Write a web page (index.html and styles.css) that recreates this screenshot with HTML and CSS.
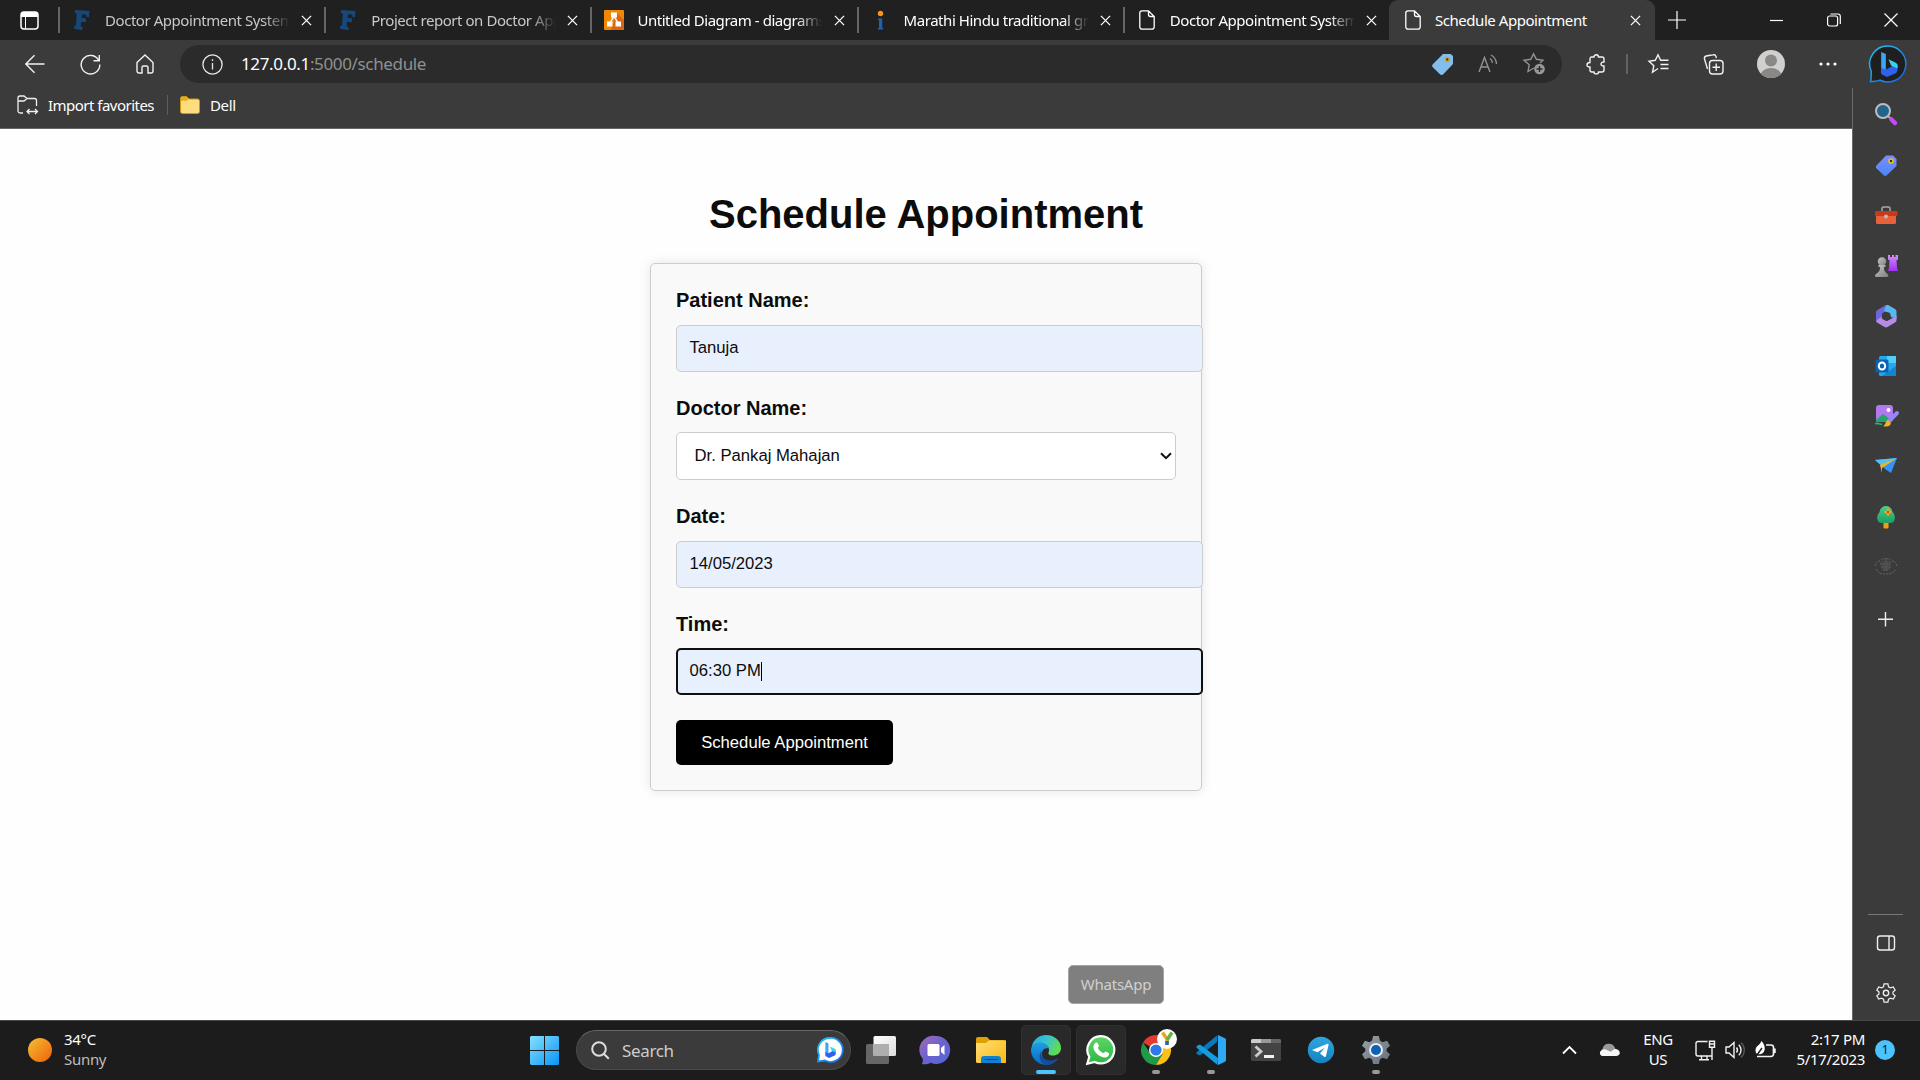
FILE: index.html
```
<!DOCTYPE html>
<html lang="en">
<head>
<meta charset="utf-8">
<title>Schedule Appointment</title>
<link rel="stylesheet" href="styles.css">
</head>
<body>
<svg class="defs" aria-hidden="true">
  <defs>
    <linearGradient id="gBing" x1="0" y1="0" x2="1" y2="1"><stop offset="0" stop-color="#22c7f0"/><stop offset="1" stop-color="#1d5fe8"/></linearGradient>
    <linearGradient id="gTag" x1="0" y1="0" x2="0" y2="1"><stop offset="0" stop-color="#7d8cff"/><stop offset="1" stop-color="#4a86f7"/></linearGradient>
    <linearGradient id="gPurple" x1="0" y1="0" x2="0" y2="1"><stop offset="0" stop-color="#d68bff"/><stop offset="1" stop-color="#a030f0"/></linearGradient>
    <linearGradient id="gGrey" x1="0" y1="0" x2="1" y2="1"><stop offset="0" stop-color="#c6c6c6"/><stop offset="1" stop-color="#7e7e7e"/></linearGradient>
    <linearGradient id="gWin" x1="0" y1="0" x2="1" y2="1"><stop offset="0" stop-color="#86e0ff"/><stop offset="1" stop-color="#0895f6"/></linearGradient>
    <linearGradient id="gSun" x1="0" y1="0" x2="1" y2="1"><stop offset="0" stop-color="#f3c02f"/><stop offset="1" stop-color="#f0600d"/></linearGradient>
    <linearGradient id="gChat" x1="0" y1="0" x2="1" y2="1"><stop offset="0" stop-color="#a469b5"/><stop offset=".5" stop-color="#6a62cf"/><stop offset="1" stop-color="#5367d8"/></linearGradient>
    <linearGradient id="gFolder" x1="0" y1="0" x2="1" y2="1"><stop offset="0" stop-color="#ffdf7a"/><stop offset="1" stop-color="#f7b90c"/></linearGradient>
    <linearGradient id="gEdgeTop" x1="0" y1="0" x2="1" y2=".4"><stop offset="0" stop-color="#2aa9e0"/><stop offset=".5" stop-color="#36c3d2"/><stop offset="1" stop-color="#61db54"/></linearGradient>
    <linearGradient id="gEdgeL" x1="0" y1="0" x2="0" y2="1"><stop offset="0" stop-color="#1f9fe2"/><stop offset="1" stop-color="#0b68c4"/></linearGradient>
    <linearGradient id="gWa" x1="0" y1="0" x2="0" y2="1"><stop offset="0" stop-color="#5fd669"/><stop offset="1" stop-color="#2cb742"/></linearGradient>
    <linearGradient id="gTg" x1="0" y1="0" x2="0" y2="1"><stop offset="0" stop-color="#2ea6e0"/><stop offset="1" stop-color="#1483c0"/></linearGradient>
    <linearGradient id="gWhite" x1="0" y1="0" x2="1" y2="1"><stop offset="0" stop-color="#fff"/><stop offset="1" stop-color="#dcdcdc"/></linearGradient>
    <linearGradient id="gGear" x1="0" y1="0" x2="1" y2="1"><stop offset="0" stop-color="#99a1aa"/><stop offset="1" stop-color="#66707b"/></linearGradient>
    <linearGradient id="gTree" x1="0" y1="0" x2="0" y2="1"><stop offset="0" stop-color="#49cf8c"/><stop offset="1" stop-color="#1e9c63"/></linearGradient>
    <symbol id="page" viewBox="0 0 16 20"><path d="M3 .8h6.500L15.200 6.500V17a2.200 2.200 0 0 1-2.200 2.200H3A2.200 2.200 0 0 1 .8 17V3A2.200 2.200 0 0 1 3 .8zM9.500 1v3.500a2 2 0 0 0 2 2H15"/></symbol>
    <symbol id="x" viewBox="0 0 12 12"><path d="M1 1l10 10M11 1L1 11"/></symbol>
    <symbol id="serifF" viewBox="0 0 16 20"><path fill="#17487a" d="M1 0l14.500 1-.6 6.200-2.400-.3-.5-2.400-4-.3-.5 3.700 4.600.3-.3 4-4.700-.4-.5 4.700 2 .8-.2 2.900L0 18.700l.2-2.700 1.700-.4L2.900 3.700.8 2.900z"/></symbol>
    <symbol id="bingb" viewBox="0 0 16 24"><path fill="#3aa7f5" d="M0 0l4.500 2v15L0 20z"/><path fill="#2e62ee" d="M0 15l4.500 2 9-5 2 3.500c.6 1.800 0 3.800-1.500 4.800L5.500 24 0 21z"/><path fill="#35d3ee" d="M7 7l7 3.300c2 1.200 2.400 3.600 1.500 5.500L9.500 13z"/></symbol>
    <symbol id="gear" viewBox="0 0 24 24"><path d="M9.800 1.500h4.400l.7 3.400 2.100 1.200 3.300-1.100 2.200 3.800L20 11v2l2.500 2.200-2.200 3.800-3.300-1.100-2.100 1.200-.7 3.400H9.800l-.7-3.400L7 17.900 3.700 19l-2.200-3.800L4 13v-2L1.500 8.800 3.700 5 7 6.100l2.100-1.200z"/></symbol>
  </defs>
</svg>

<header class="tabstrip">
  <button class="tab-actions"><svg width="19" height="19" viewBox="0 0 19 19"><rect x="1" y="1" width="17" height="17" rx="3" fill="none" stroke="#fff" stroke-width="1.500"/><path d="M1 6V4a3 3 0 0 1 3-3h11a3 3 0 0 1 3 3v2z" fill="#fff"/><path d="M5.500 6v12" stroke="#fff"/></svg></button>
  <div class="tab dim"><svg class="fav" viewBox="0 0 16 20"><use href="#serifF"/></svg><span class="title fade">Doctor Appointment System</span><svg class="close"><use href="#x"/></svg></div>
  <div class="tab dim"><svg class="fav" viewBox="0 0 16 20"><use href="#serifF"/></svg><span class="title fade">Project report on Doctor App</span><svg class="close"><use href="#x"/></svg></div>
  <div class="tab"><svg class="fav wide" viewBox="0 0 20 20"><rect width="20" height="20" rx="1" fill="#f08705"/><path d="M13 3l7 7v10H7z" fill="#d86613"/><path d="M10 6L5.500 14M10 6l4.500 8" stroke="#fff" stroke-width="1.500"/><path d="M7 2.500h6v5H7zM3 11.500h5.500v5H3zM11.500 11.500H17v5h-5.500z" fill="#fff"/></svg><span class="title fade">Untitled Diagram - diagrams.net</span><svg class="close"><use href="#x"/></svg></div>
  <div class="tab"><svg class="fav" viewBox="0 0 16 20"><circle cx="7.500" cy="3.500" r="2.700" fill="#f7931e"/><path d="M5 8.500h4.200V18h1v1.500H4.800V18h1.200v-8h-1z" fill="#1d62b0"/></svg><span class="title fade">Marathi Hindu traditional groom</span><svg class="close"><use href="#x"/></svg></div>
  <div class="tab"><svg class="fav line"><use href="#page"/></svg><span class="title fade">Doctor Appointment System</span><svg class="close"><use href="#x"/></svg></div>
  <div class="tab active"><svg class="fav line"><use href="#page"/></svg><span class="title">Schedule Appointment</span><svg class="close"><use href="#x"/></svg></div>
  <svg class="newtab" viewBox="0 0 18 18"><path d="M9 0v18M0 9h18"/></svg>
  <div class="winctl">
    <svg width="14" height="14" viewBox="0 0 14 14"><path d="M0 7.500h13"/></svg>
    <svg width="14" height="14" viewBox="0 0 14 14"><rect x=".6" y="3" width="10" height="10" rx="2"/><path d="M3.500 1h7.500a2.300 2.300 0 0 1 2.300 2.300V11"/></svg>
    <svg width="14" height="14" viewBox="0 0 14 14"><path d="M.5.500l13 13M13.500.5l-13 13"/></svg>
  </div>
</header>

<div class="toolbar">
  <div class="nav">
    <svg width="20" height="20" viewBox="0 0 20 20"><path d="M19.500 10H1M9.500 1.200L.8 10l8.700 8.800"/></svg>
    <svg width="21" height="21" viewBox="0 0 21 21"><path d="M18.800 6.500A9.300 9.300 0 1 0 19.800 10.500M19.300 1v5.800h-5.800"/></svg>
    <svg width="18" height="20" viewBox="0 0 18 20"><path d="M1 8.500L9 1l8 7.500V17a2 2 0 0 1-2 2h-3v-5.500a1.500 1.500 0 0 0-1.500-1.500h-3A1.500 1.500 0 0 0 6 13.500V19H3a2 2 0 0 1-2-2z"/></svg>
  </div>
  <div class="address">
    <svg class="info" width="21" height="21" viewBox="0 0 21 21"><circle cx="10.500" cy="10.500" r="9.600"/><path d="M10.500 9v6.500M10.500 5.300v1.700"/></svg>
    <span class="url"><b>127.0.0.1</b>:5000/schedule</span>
    <div class="addr-icons">
      <svg width="21" height="21" viewBox="0 0 21 21"><path d="M11 0h7.500L21 2v8L11.500 20c-1.200 1.200-2.600 1.200-3.800 0L1 13.500c-1.200-1.200-1.200-2.300 0-3.500z" fill="#83bdec"/><circle cx="15.300" cy="5.500" r="1.900" fill="#333" stroke="#d9a70a" stroke-width="1.500"/></svg>
      <svg class="mut" width="20" height="20" viewBox="0 0 20 20"><path d="M1 18L6.500 3.500 12 18M3 13h7M12 4.500a6 6 0 0 1 2.500 4.500M13 1a11 11 0 0 1 5.500 9"/></svg>
      <svg class="mut" width="22" height="22" viewBox="0 0 22 22"><path d="M11 15L5 18.500l1.200-6.700L1 7.300l6.800-1L10.500.8l2.900 5.500 6.600 1-3 2.700"/><circle cx="16.500" cy="16" r="5.300" fill="#999" stroke="none"/><path d="M16.500 13v6M13.500 16h6" stroke="#2b2b2b"/></svg>
    </div>
  </div>
  <div class="tools">
    <svg width="20" height="20" viewBox="0 0 20 20"><path d="M5 3h3c0-3 4.500-3 4.500 0H16a2 2 0 0 1 2 2v3c-4-.5-4 4.500 0 4V16a2 2 0 0 1-2 2h-3.500c0 2.500-4.500 2.500-4.500 0H6a2 2 0 0 1-2-2v-3c-4 .5-4-4.500 0-4.500V5a2 2 0 0 1 1-2z"/></svg>
    <i></i>
    <svg width="21" height="20" viewBox="0 0 21 20"><path d="M10 14.500L4.500 18.300l1.300-6.500L1 7.200l6.300-.9L10 .8l2.600 5.500h7.900M12.500 10.500h8M12.500 14.500h8"/></svg>
    <svg width="21" height="21" viewBox="0 0 21 21"><rect x="6.500" y="6.500" width="13.500" height="13.500" rx="3"/><path d="M13.200 9.500v7.500M9.500 13.200H17M4.500 15L1.500 5a2.500 2.500 0 0 1 1.700-3L10 .8a2.500 2.500 0 0 1 3 1.600l.4 1.600"/></svg>
    <svg class="avatar" width="28" height="28" viewBox="0 0 28 28"><clipPath id="av"><circle cx="14" cy="14" r="14"/></clipPath><g clip-path="url(#av)"><path fill="#d2d0ce" d="M0 0h28v28H0z"/><circle cx="14" cy="10.500" r="6" fill="#8a8886"/><ellipse cx="14" cy="26" rx="10.500" ry="8" fill="#8a8886"/></g></svg>
    <svg class="dots" width="18" height="4" viewBox="0 0 18 4"><circle cx="2" cy="2" r="1.600"/><circle cx="9" cy="2" r="1.600"/><circle cx="16" cy="2" r="1.600"/></svg>
    <svg class="bing" width="38" height="38" viewBox="0 0 38 38"><path d="M19 1a18 18 0 1 1-8 34.200c-3 1.500-6 1.300-9.500 1.300C2.500 34 2 31 2.300 26.500A18 18 0 0 1 19 1z" fill="#1f1f1f" stroke="url(#gBing)" stroke-width="1.500"/><use href="#bingb" x="12" y="7" width="17" height="25"/></svg>
  </div>
</div>

<div class="main">
  <div class="content">
    <div class="favorites">
      <svg width="21" height="20" viewBox="0 0 21 20"><path d="M6 18H3a2 2 0 0 1-2-2V3a2 2 0 0 1 2-2h4l3 2.500h7.500a2 2 0 0 1 2 2V11M1 6h6l3-2.500M11 16.500h9M12.500 14L10 16.500l2.500 2.500M18 14l2.500 2.500L18 19" fill="none" stroke="#f0f0f0" stroke-width="1.300"/></svg>
      <span class="imp">Import favorites</span><i></i>
      <svg width="20" height="18" viewBox="0 0 20 18"><path d="M.5 2.500a2 2 0 0 1 2-2h4L9 3h8.500a2 2 0 0 1 2 2v10.500a2 2 0 0 1-2 2h-15a2 2 0 0 1-2-2z" fill="#ffdc7d" stroke="#c99a12"/><path d="M1 4.800h5.500L9 3 6.500 1h-4A1.500 1.500 0 0 0 1 2.500z" fill="#e2ad23"/></svg>
      <span class="dell">Dell</span>
    </div>
    <main class="page">
      <h1>Schedule Appointment</h1>
      <form class="card">
        <label for="p">Patient Name:</label>
        <div class="field" id="p">Tanuja</div>
        <label for="d">Doctor Name:</label>
        <div class="field select" id="d"><span>Dr. Pankaj Mahajan</span><svg width="12" height="8" viewBox="0 0 12 8"><path d="M1 1.200l5 5 5-5" fill="none" stroke="#111" stroke-width="2"/></svg></div>
        <label for="dt">Date:</label>
        <div class="field" id="dt">14/05/2023</div>
        <label for="tm">Time:</label>
        <div class="field focus" id="tm">06:30 PM<span class="caret"></span></div>
        <button type="button" class="submit">Schedule Appointment</button>
      </form>
    </main>
  </div>
  <aside class="sidebar">
    <svg viewBox="0 0 24 24"><path d="M14.500 14.500l2 2" stroke="#aaa" stroke-width="2"/><path d="M17.500 17.500l3.500 3.500" stroke="#c548f5" stroke-width="4.500" stroke-linecap="round"/><circle cx="9" cy="9" r="7" fill="#23648a" stroke="#bdbdbd" stroke-width="2"/></svg>
    <svg viewBox="0 0 24 24"><path d="M12 1.500h7L22.500 5v7L13 21c-1.200 1.200-2.500 1.200-3.500 0L2.500 14.500c-1-1-1-2 0-3z" fill="url(#gTag)"/><circle cx="17" cy="7" r="2" fill="#333" stroke="#f2c50e" stroke-width="1.500"/></svg>
    <svg viewBox="0 0 24 24"><path d="M8 7V4.500A1.500 1.500 0 0 1 9.500 3h5A1.500 1.500 0 0 1 16 4.500V7" fill="none" stroke="#aaa" stroke-width="1.500"/><rect x="2" y="10" width="20" height="10" rx="1.500" fill="#e8613c"/><rect x="1" y="7" width="22.500" height="5" rx="1" fill="#c8381b"/><circle cx="12" cy="12.500" r="2" fill="#bbb"/></svg>
    <svg viewBox="0 0 24 24"><path d="M14 1h2v2h2V1h2v2h1.500V1H24v5h-1.500l.5 8 1 3H14l1-3 .5-8H14z" fill="url(#gPurple)"/><circle cx="8" cy="7.500" r="4.200" fill="url(#gGrey)"/><path d="M4.500 11h7v2H10c0 4 1 5 4 7.500a1.500 1.500 0 0 1-1 2.500H2.500c-1.500 0-2-1.500-1-2.500C5 18 6 17 6 13H4.500z" fill="url(#gGrey)"/></svg>
    <svg viewBox="0 0 24 24"><path d="M12 1L3.500 6A2.500 2.500 0 0 0 2 8.500V17l6 1V9.500L14 6V2z" fill="#6f67d9"/><path d="M12 1.500c1-.7 2-.5 3 0l6 3.500a3 3 0 0 1 1.500 2.500V15L17 13l-1-4-6-2z" fill="#58b7ee"/><path d="M22.500 12v4a2.500 2.500 0 0 1-1.500 2.500L13.500 23a3 3 0 0 1-3 0L3 18.500A3 3 0 0 1 2 17l5-4 6 4z" fill="#b68be6"/><path d="M12 8l4 2.300v4.400L12 17l-4-2.300v-4.400z" fill="#3b3b3b"/></svg>
    <svg viewBox="0 0 24 24"><rect x="5" y="2" width="17" height="20" rx="1.500" fill="#28a8ea"/><path d="M13 2h9v7h-9z" fill="#50d0f8"/><path d="M22 12v10H8z" fill="#1484d0"/><rect x="1.500" y="5.500" width="13" height="13" rx="1.500" fill="#0862b8"/><ellipse cx="8" cy="12" rx="3.200" ry="3.500" fill="none" stroke="#fff" stroke-width="2"/></svg>
    <svg viewBox="0 0 24 24"><rect x="2" y="1" width="17" height="17" rx="3" fill="#b477f2"/><circle cx="14.500" cy="6" r="2" fill="#fff"/><path d="M2 16l7-6 8 6v2H2z" fill="#25a56a"/><path d="M1 20c3-2 4 1 7 0" stroke="#28b878" stroke-width="1.500" fill="none"/><path d="M15 17l8-8" stroke="#8f8af5" stroke-width="4" stroke-linecap="round"/><path d="M14 16l3 3c-1 4-4 4-8 3 3-1 2-5 5-6z" fill="#f5b21c"/></svg>
    <svg viewBox="0 0 24 24"><path d="M1 5l22-2-6 15-6-4z" fill="#3594f3"/><path d="M1 5l22-2L9 12z" fill="#52c0f3"/><path d="M23 3L8 13v5L6 10z" fill="#f7b21a"/></svg>
    <svg viewBox="0 0 24 24"><rect x="9.500" y="16" width="5" height="7.500" rx="1" fill="#f19d12"/><path d="M12 1c4 0 6 3 6.500 6 2 2 2.500 4.500 2.300 6.500-.3 3-2 4.500-4.500 4.500H7.500C5 18 3.400 16 3.200 13.500 3 11 4 9 5.500 7 6 4 8 1 12 1z" fill="url(#gTree)"/><path d="M14 4.500v5M11.500 7h5" stroke="#f9a11b" stroke-width="2.400" stroke-linecap="round"/><circle cx="14" cy="7" r="1.200" fill="#c55a11"/></svg>
    <svg viewBox="0 0 24 24"><g fill="none" stroke="#656565" stroke-dasharray="2 1"><path d="M1 11c2-5 3-5 5-5M23 11c-2-5-3-5-5-5M2 14c3 5 6 5 10 5s7 0 10-5M7 5c2-2 8-2 10 0M6 9h12M7 12h10M9 15h6M12 4v11"/></g><path d="M7 6h10l-1 8-4 2-4-2z" fill="#535353" opacity=".6"/></svg>
    <svg viewBox="0 0 24 24" class="ln"><path d="M11.500 5v14.500M4 12.300h15"/></svg>
    <hr>
    <svg viewBox="0 0 24 24" class="ln"><rect x="3.500" y="5" width="17" height="14" rx="2.500"/><path d="M15 5v14"/></svg>
    <svg viewBox="0 0 24 24" class="ln"><use href="#gear" x="1.500" y="1.500" width="21" height="21"/><circle cx="12" cy="12" r="2.700"/></svg>
  </aside>
</div>

<div class="tooltip">WhatsApp</div>

<footer class="taskbar">
  <div class="weather"><svg width="24" height="24" viewBox="0 0 24 24"><circle cx="12" cy="12" r="12" fill="url(#gSun)"/></svg><div><span class="w1">34°C</span><span class="w2">Sunny</span></div></div>
  <div class="apps">
    <svg class="start" width="29" height="29" viewBox="0 0 29 29"><path d="M1 0h13v14H0V1zM15 0h13l1 1v13H15zM0 15h14v14H1l-1-1zM15 15h14v13l-1 1H15z" fill="url(#gWin)"/></svg>
    <div class="search">
      <svg width="19" height="19" viewBox="0 0 19 19" fill="none" stroke="#ddd" stroke-width="2"><circle cx="8" cy="8" r="6.800"/><path d="M13 13l4.800 4.800"/></svg>
      <span>Search</span>
      <svg width="26" height="26" viewBox="0 0 26 26"><path d="M13 1a12 12 0 1 1-5 22.500L1 24.500 2 18A12 12 0 0 1 13 1z" fill="#fff" stroke="url(#gBing)" stroke-width="1.800"/><use href="#bingb" x="8" y="5" width="11.500" height="16"/></svg>
    </div>
    <div class="app"><svg viewBox="0 0 30 30"><rect y="9" width="23" height="20" rx="1.500" fill="#666"/><rect x="7.500" y="1" width="22.500" height="20" rx="1.500" fill="url(#gWhite)"/><path d="M7.500 9H23v12H7.500z" fill="#aeaeae"/></svg></div>
    <div class="app"><svg viewBox="0 0 30 30"><path d="M15 1a14 14 0 1 1-5.500 26.800C7 29.500 3 29.500.8 29c1-1.500 1.200-3.500 1-5A14 14 0 0 1 15 1z" fill="url(#gChat)"/><rect x="6.500" y="9" width="12" height="12" rx="1.500" fill="#fff"/><path d="M20 13l3.500-3v10L20 17z" fill="#fff"/></svg></div>
    <div class="app"><svg viewBox="0 0 30 30"><path d="M0 4a2 2 0 0 1 2-2h9l3 3h14a2 2 0 0 1 2 2v4H0z" fill="#dda005"/><path d="M0 8h10l3-2.500h17V28H1.500A1.500 1.500 0 0 1 0 26.500z" fill="url(#gFolder)"/><path d="M5 28v-4a3 3 0 0 1 3-3h14a3 3 0 0 1 3 3v4z" fill="#1280d0"/><path d="M8.500 24.500h13" stroke="#0b4c92"/></svg></div>
    <div class="app tile run on"><svg viewBox="0 0 30 30"><path d="M1.200 10C3 4 8.500 0 15 0c9 0 15 6.500 15 13 0 5-4 7.500-8 7.500-4 0-5-1.500-4.500-3 1.500-3 0-7-4-8.500-5-1.500-10-.5-12.300 4z" fill="url(#gEdgeTop)"/><path d="M0 15C0 10 4 7.500 9 7.500c4 0 8 2.500 8.800 6-6-2-9 5-5 10.500 2 2.700 4 5 6.500 5.400C9 32 0 24.500 0 15z" fill="url(#gEdgeL)"/><path d="M10.500 16c-1.500 6 3.500 10 9.500 9.500 3-.2 5.500-1.500 7.500-2.500-2.500 4.500-7 7-12.500 7C9 28.500 6.500 20 10.500 16z" fill="#114f9d"/></svg></div>
    <div class="app tile"><svg viewBox="0 0 30 30"><path d="M15.200 1.200A13.600 13.600 0 1 1 8.700 27L1.300 28.800l2-7A13.600 13.600 0 0 1 15.200 1.200z" fill="url(#gWa)" stroke="#fff" stroke-width="2.200"/><path d="M10 7.500c.8-.3 1.500 0 1.900 1l1 2.300c.2.700-1.200 1.800-1 2.300 1.200 2.500 3 4 5.500 5 .7.200 1.700-1.700 2.300-1.500l3 1.500c.7.500.3 2.500-.7 3.400-2 1.500-4.500 1.200-7.500-.3-3.500-1.700-6.500-5-7-8.200-.2-2.500.5-4.500 2.500-5.500z" fill="#fff"/></svg></div>
    <div class="app run"><svg viewBox="0 0 30 30"><path d="M15 15L2 7.500A15 15 0 0 1 28 7.500L15 15z" fill="#e33b2e"/><path d="M2 7.500A15 15 0 0 0 15 30l7-12-7-3-6 3z" fill="#219a48"/><path d="M28 7.500A15 15 0 0 1 15 30l6.500-11L18 7.500z" fill="#fbc116"/><circle cx="15" cy="15" r="7" fill="#fff"/><circle cx="15" cy="15" r="5.600" fill="#2f78ea"/><circle cx="26" cy="4" r="10" fill="#fff"/><path d="M21.500-2.500L26 4v6" stroke="#eda51c" stroke-width="3.500" fill="none"/><path d="M31-2.500L26 5" stroke="#65b443" stroke-width="3.500"/><path d="M26 6v4" stroke="#2366b4" stroke-width="3.500"/></svg></div>
    <div class="app run"><svg viewBox="0 0 30 30"><path d="M21 7L4 20.500l-2.500-1c-1.500-1-1.500-2 0-3L21.500 0z" fill="#0b78bd"/><path d="M22 23L4 9.500l-2.500 1c-1.500 1-1.500 2 0 3L21.500 30z" fill="#159be0"/><path d="M22 0l6.500 3c1 .5 1.500 1 1.500 2v20c0 1-.5 1.500-1.500 2L22 30z" fill="#2daaf3"/></svg></div>
    <div class="app"><svg viewBox="0 0 30 30"><rect y="4" width="30" height="22" rx="1.500" fill="#444"/><path d="M0 8V5.500A1.500 1.500 0 0 1 1.500 4H10v4z" fill="#ccc"/><path d="M10 4h10v4H10z" fill="#999"/><path d="M20 4h8.500A1.500 1.500 0 0 1 30 5.500V8H20z" fill="#666"/><path d="M4.500 11.500l5.500 5-5.500 5" fill="none" stroke="#ccc" stroke-width="2.800"/><path d="M13 20h10v3H13z" fill="#f2f2f2"/></svg></div>
    <div class="app"><svg viewBox="0 0 30 30"><circle cx="15" cy="15" r="13.200" fill="url(#gTg)"/><path d="M6 15l15.500-6.200c.8-.2 1.200.3 1 1.200L20 21c-.3 1-1 1.200-1.800.7L14 18.500l5-6-7.500 4.800z" fill="#fff"/></svg></div>
    <div class="app run"><svg viewBox="0 0 30 30"><use href="#gear" x="-1" y="-1" width="32" height="32" fill="url(#gGear)"/><circle cx="15" cy="15" r="7" fill="#e8eef3"/><circle cx="15" cy="15" r="5" fill="#0f5fb3"/></svg></div>
  </div>
  <div class="tray">
    <svg class="chev" width="15" height="10" viewBox="0 0 15 10"><path d="M1 8.500l6.500-6.500L14 8.500" fill="none" stroke="#fff" stroke-width="1.800"/></svg>
    <svg class="cloud" width="21" height="14" viewBox="0 0 21 14"><path d="M3.500 6a6.500 6.500 0 0 1 12-2l1.500 3-9 6H4A4 4 0 0 1 3.500 6z" fill="#999"/><path d="M1 9c2-3 5-3.500 7-2l3.500 1.800 4-2.800c3.500-.3 5.500 2 5.300 4.500A3.500 3.500 0 0 1 17.500 13H4C1.500 13 .5 11 1 9z" fill="#f5f5f5"/></svg>
    <div class="lang">ENG<br>US</div>
    <svg class="ic" width="20" height="21" viewBox="0 0 20 21"><path d="M12.500 1.500H3A2 2 0 0 0 1 3.500V14a2 2 0 0 0 2 2h14M6.500 16v3.500M12 16v3.500M4 19.700h10M14.500 1.200h5v6h-5zM14.500 4h5M17 7.500V20"/></svg>
    <svg class="ic spk" width="20" height="18" viewBox="0 0 20 18"><path d="M1 6h3l5-4.500v15L4 12H1zM11.500 6.500c1.200 1.500 1.200 3.500 0 5M13.800 3.800c3 3 3 7.400 0 10.400"/><path d="M16 1.500c4.500 4.500 4.500 10.500 0 15" stroke="#555"/></svg>
    <svg class="ic bat" width="21" height="18" viewBox="0 0 21 18"><path d="M11 4h5a2.500 2.500 0 0 1 2.500 2.500v6.500A2.500 2.500 0 0 1 16 15.500H2" stroke-width="1.700"/><path d="M19.500 7.500v4.500" stroke-width="2.500"/><path d="M6.500 0c3.500 3.500 4.500 9 1.500 12-2.500 1.800-5.500 1.500-7 0-1-3-.5-5.500 1.500-7C4.500 3.500 5.500 2 6.500 0z" fill="#fff" stroke="none"/><path d="M2 14l5-7" stroke="#1c1c1c"/></svg>
    <div class="clock">2:17 PM<br>5/17/2023</div>
    <span class="count">1</span>
  </div>
</footer>
</body>
</html>
```
FILE: styles.css
```
* { box-sizing: border-box; }
html, body { height: 100%; }
body { margin: 0; overflow: hidden; display: flex; flex-direction: column; background: #3b3b3b; color: #fff; font-family: "Noto Sans", sans-serif; font-size: 15px; }
.defs { position: absolute; width: 0; height: 0; }
svg { display: block; flex: none; overflow: visible; }
button { font: inherit; border: 0; padding: 0; background: none; }
span { white-space: nowrap; }

/* tab strip */
.tabstrip { height: 40px; flex: none; display: flex; background: #202020; }
.tab-actions { width: 58px; padding-left: 20px; display: flex; align-items: center; }
.tab { width: 266.2px; flex: none; display: flex; align-items: center; padding: 0 12px 0 14px; border-left: 2px solid transparent; border-image: linear-gradient(transparent 20%, #666 20%, #666 82%, transparent 82%) 1; }
.tab.active { background: #3b3b3b; border: 0; border-radius: 9px 9px 0 0; padding: 0 14px 0 16px; }
.fav { width: 16px; height: 20px; margin-right: 15px; }
.fav.wide { width: 20px; margin: 0 13px 0 -2px; }
.line { fill: none; stroke: #fff; stroke-width: 1.3; }
.title { width: 185px; flex: none; overflow: hidden; letter-spacing: -.45px; line-height: 26px; margin-top: -1px; }
.active .title { margin-left: -1px; }
.dim .title { color: #c8c8c8; }
.fade { -webkit-mask-image: linear-gradient(90deg, #000 86%, transparent); mask-image: linear-gradient(90deg, #000 86%, transparent); }
.close { width: 11px; height: 11px; margin-left: auto; stroke: #fff; stroke-width: 1.4; }
.newtab { width: 18px; height: 18px; margin: 11px 0 0 13px; stroke: #fff; stroke-width: 1.2; }
.winctl { margin-left: auto; padding-right: 22px; display: flex; align-items: center; gap: 43px; fill: none; stroke: #fff; stroke-width: 1.2; }

/* toolbar */
.toolbar { height: 48px; flex: none; display: flex; align-items: center; }
.nav { width: 180px; padding-left: 25px; display: flex; align-items: center; gap: 35px; fill: none; stroke: #f2f2f2; stroke-width: 1.4; }
.address { width: 1382px; height: 38px; border-radius: 19px; background: #2b2b2b; display: flex; align-items: center; padding: 0 17px 0 22px; }
.info { fill: none; stroke: #e8e8e8; stroke-width: 1.3; margin-right: 18px; }
.url { color: #909090; font-size: 17px; letter-spacing: -.35px; margin-top: -2px; }
.url b { color: #fff; font-weight: 400; }
.addr-icons { margin-left: auto; display: flex; align-items: center; gap: 25px; }
.mut { fill: none; stroke: #929292; stroke-width: 1.4; }
.tools { flex: 1; display: flex; align-items: center; padding-left: 24px; fill: none; stroke: #f2f2f2; stroke-width: 1.4; }
.tools i { width: 2px; height: 20px; background: #626262; margin: 0 20px; }
.tools svg + svg { margin-left: 34px; }
.tools svg.avatar { stroke: none; margin-left: 33px; }
.tools .dots { fill: #fff; stroke: none; }
.tools svg.bing { stroke: none; margin-left: 32px; }

.main { height: 932px; flex: none; display: flex; }
.content { flex: 1; display: flex; flex-direction: column; }
.favorites { height: 41px; flex: none; display: flex; align-items: center; padding: 0 0 6px 17px; border-bottom: 1px solid #666; letter-spacing: -.52px; }
.imp { margin-left: 10px; }
.favorites i { width: 1px; height: 20px; background: #5c5c5c; margin: 0 12px 0 13px; }
.dell { margin-left: 10px; letter-spacing: -.35px; }

/* web page */
.page { flex: 1; background: #fefefe; color: #0c0c0c; display: flex; flex-direction: column; align-items: center; padding-top: 62px; font-family: "Liberation Sans", Arial, sans-serif; }
h1 { margin: 0 0 26px; font-size: 40px; line-height: 46px; }
.card { width: 552px; padding: 25px; background: #f9f9f9; border: 1px solid #ccc; border-radius: 5px; box-shadow: 0 0 12px rgba(0,0,0,.1); }
label { display: block; font-size: 20px; line-height: 23px; margin-bottom: 12px; font-weight: 700; }
label:first-child { margin-bottom: 13px; }
.field { width: 527px; height: 47px; margin-bottom: 25px; padding: 0 12.500px; display: flex; align-items: center; background: #e8f0fe; border: 1px solid #ccc; border-radius: 5px; font-size: 16.670px; padding-bottom: 1px; }
.select { width: 500px; height: 48px; background: #fff; padding: 0 3px 0 17.500px; justify-content: space-between; }
.select + label { margin-bottom: 13px; }
.focus { border: 2px solid #101010; padding-left: 11.500px; }
.caret { width: 1px; height: 19px; background: #000; }
.submit { display: block; width: 217px; height: 45px; border-radius: 5px; background: #000; color: #fff; font-size: 16.670px; }

/* browser sidebar */
.sidebar { width: 68px; border-left: 1px solid #6a6a6a; display: flex; flex-direction: column; align-items: center; padding: 14px 2px 0 0; }
.sidebar svg { width: 24px; height: 24px; margin-bottom: 26.200px; }
.sidebar svg:first-child { margin-bottom: 27.500px; }
.sidebar svg:nth-child(10) { margin-bottom: 27.500px; }
.sidebar hr { width: 35px; border: 0; border-top: 1px solid #777; margin: auto 0 16px; }
.sidebar hr ~ svg { margin-bottom: 26px; }
.sidebar hr ~ svg:last-child { margin-bottom: 15px; }
.ln { fill: none; stroke: #eee; stroke-width: 1.4; }

.tooltip { position: absolute; left: 1068px; top: 965px; width: 96px; height: 39px; border-radius: 5px; background: #7f7f7f; color: #d0d0d0; line-height: 37px; text-align: center; border: 1px solid #a4a4a4; letter-spacing: -.25px; }

/* taskbar */
.taskbar { height: 60px; flex: none; display: flex; background: #1c1c1c; border-top: 1px solid #494949; }
.weather { width: 530px; padding-left: 28px; display: flex; align-items: center; gap: 12px; line-height: 20px; letter-spacing: -.3px; }
.weather svg { margin-top: -2px; }
.weather div { margin-top: -4px; }
.weather span { display: block; }
.w2 { color: #bdbdbd; }
.apps { display: flex; align-items: center; padding-bottom: 1px; }
.search { width: 275px; height: 40px; margin: 0 2px 0 17px; border-radius: 20px; background: #3b3b3b; border: 1px solid #4b4b4b; border-top-color: #666; display: flex; align-items: center; padding: 0 7px 0 14px; color: #ccc; font-size: 17px; }
.search span { margin: 0 auto 0 12px; letter-spacing: -.35px; }
.app { width: 50px; height: 50px; margin-left: 5px; border-radius: 5px; display: flex; align-items: center; justify-content: center; position: relative; border: 1px solid transparent; }
.app:nth-child(3) { margin-left: 3px; }
.app svg { width: 30px; height: 30px; }
.tile { background: #292929; border-color: #303030; }
.run::after { content: ""; position: absolute; bottom: 0; width: 8px; height: 4px; border-radius: 2px; background: #999; }
.on::after { width: 20px; background: #4cc2ff; }
.tray { margin-left: auto; padding: 0 25px 1px 0; display: flex; align-items: center; line-height: 20px; letter-spacing: -.35px; }
.cloud { margin: 0 23px 0 22px; }
.lang { width: 30px; text-align: center; margin: -2px 22px 0 0; white-space: nowrap; }
.ic { fill: none; stroke: #f2f2f2; stroke-width: 1.4; }
.spk { margin: 0 10px; }
.clock { width: 89px; text-align: right; margin: -3px 10px 0 0; letter-spacing: -.3px; }
.count { width: 20px; height: 20px; border-radius: 50%; background: #4cc2ff; color: #111; text-align: center; font-size: 12px; }
```
